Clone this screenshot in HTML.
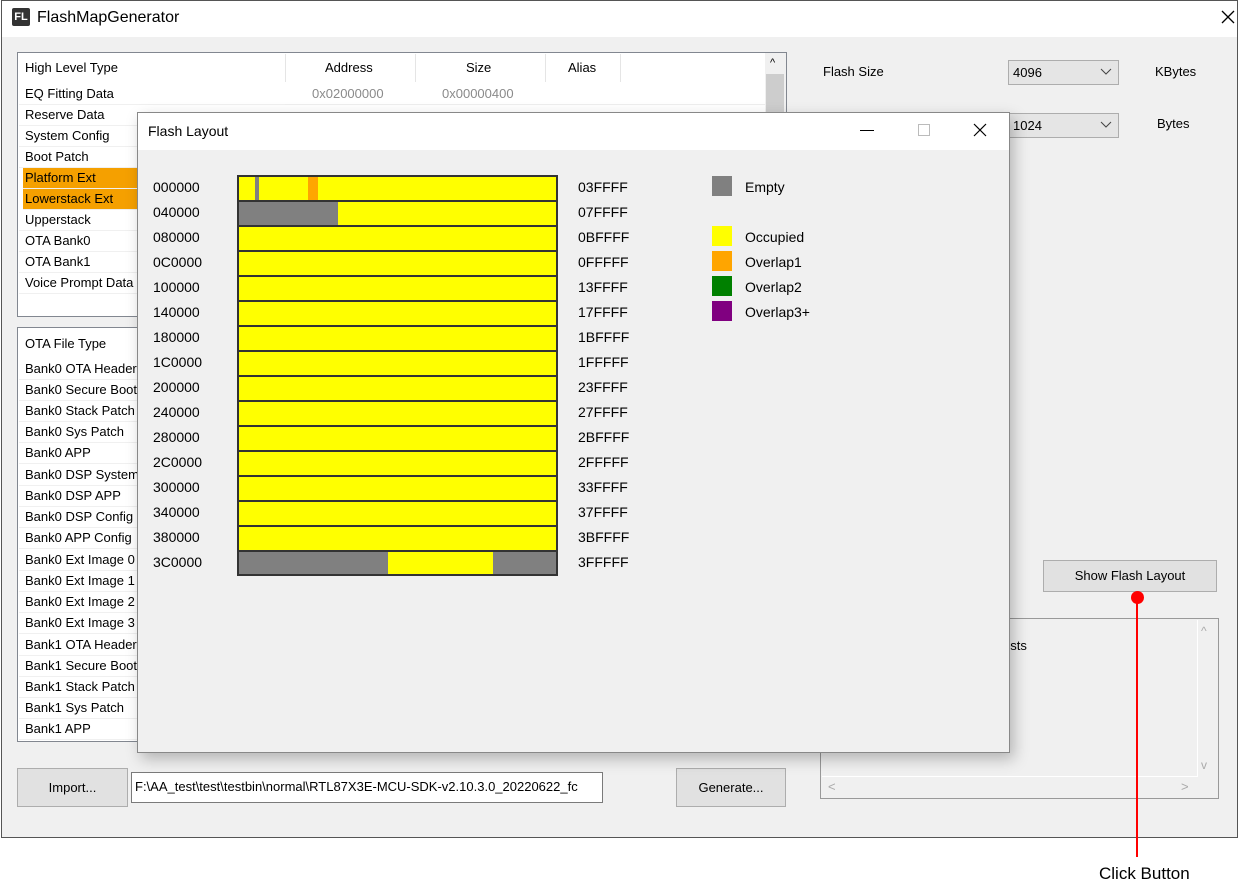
<!DOCTYPE html>
<html><head><meta charset="utf-8"><style>
*{margin:0;padding:0;box-sizing:border-box}
body{width:1248px;height:896px;background:#fff;position:relative;overflow:hidden;font-family:"Liberation Sans",sans-serif;font-size:13px;color:#000}
.a{position:absolute}
.t{position:absolute;white-space:nowrap;line-height:16px}
.row{position:absolute;left:19px;height:21px;width:266px;border-bottom:1px solid #f0f0f0;padding-left:6px;line-height:20px;white-space:nowrap}
.btn{position:absolute;background:#e1e1e1;border:1px solid #adadad;text-align:center}
.bar{position:absolute;left:237px;width:321px;height:27px;border:2px solid #333;background:#ff0}
.lbl{position:absolute;font-size:14px;line-height:16px}
.sq{position:absolute;left:712px;width:20px;height:20px}
</style></head><body>
<!-- main window -->
<div class="a" style="left:1px;top:0;width:1237px;height:838px;border:1px solid #555;background:#f0f0f0"></div>
<div class="a" style="left:2px;top:1px;width:1235px;height:36px;background:#fff"></div>
<div class="a" style="left:12px;top:8px;width:18px;height:18px;background:#333;border-radius:2px;color:#fff;font-weight:bold;font-size:11px;line-height:18px;text-align:center">FL</div>
<div class="t" style="left:37px;top:9px;font-size:16px;line-height:18px">FlashMapGenerator</div>
<svg class="a" style="left:1220px;top:9px" width="16" height="16"><path d="M2 2L14 14M14 2L2 14" stroke="#000" stroke-width="1.3"/></svg>

<!-- list 1 -->
<div class="a" style="left:17px;top:52px;width:770px;height:265px;border:1px solid #828790;background:#fff"></div>
<div class="a" style="left:765px;top:53px;width:21px;height:263px;background:#f0f0f0"></div>
<div class="a" style="left:766px;top:74px;width:18px;height:40px;background:#cdcdcd"></div>
<div class="t" style="left:770px;top:55px;font-size:11px">^</div>
<div class="t" style="left:25px;top:60px">High Level Type</div>
<div class="t" style="left:325px;top:60px">Address</div>
<div class="t" style="left:466px;top:60px">Size</div>
<div class="t" style="left:568px;top:60px">Alias</div>
<div class="a" style="left:285px;top:54px;width:1px;height:28px;background:#e5e5e5"></div>
<div class="a" style="left:415px;top:54px;width:1px;height:28px;background:#e5e5e5"></div>
<div class="a" style="left:545px;top:54px;width:1px;height:28px;background:#e5e5e5"></div>
<div class="a" style="left:620px;top:54px;width:1px;height:28px;background:#e5e5e5"></div>
<div class="t" style="left:312px;top:86px;color:#8a8a8a">0x02000000</div>
<div class="t" style="left:442px;top:86px;color:#8a8a8a">0x00000400</div>
<div class="a" style="left:285px;top:104px;width:480px;height:1px;background:#eee"></div>
<div class="row" style="top:84px">EQ Fitting Data</div>
<div class="row" style="top:105px">Reserve Data</div>
<div class="row" style="top:126px">System Config</div>
<div class="row" style="top:147px">Boot Patch</div>
<div class="row" style="top:168px;background:#f5a000;left:23px;padding-left:2px">Platform Ext</div>
<div class="row" style="top:189px;background:#f5a000;left:23px;padding-left:2px">Lowerstack Ext</div>
<div class="row" style="top:210px">Upperstack</div>
<div class="row" style="top:231px">OTA Bank0</div>
<div class="row" style="top:252px">OTA Bank1</div>
<div class="row" style="top:273px">Voice Prompt Data</div>

<!-- list 2 -->
<div class="a" style="left:17px;top:327px;width:130px;height:415px;border:1px solid #828790;background:#fff"></div>
<div class="t" style="left:25px;top:336px">OTA File Type</div>
<div class="row" style="top:359px;width:127px">Bank0 OTA Header</div>
<div class="row" style="top:380px;width:127px">Bank0 Secure Boot</div>
<div class="row" style="top:401px;width:127px">Bank0 Stack Patch</div>
<div class="row" style="top:422px;width:127px">Bank0 Sys Patch</div>
<div class="row" style="top:443px;width:127px">Bank0 APP</div>
<div class="row" style="top:465px;width:127px">Bank0 DSP System</div>
<div class="row" style="top:486px;width:127px">Bank0 DSP APP</div>
<div class="row" style="top:507px;width:127px">Bank0 DSP Config</div>
<div class="row" style="top:528px;width:127px">Bank0 APP Config</div>
<div class="row" style="top:550px;width:127px">Bank0 Ext Image 0</div>
<div class="row" style="top:571px;width:127px">Bank0 Ext Image 1</div>
<div class="row" style="top:592px;width:127px">Bank0 Ext Image 2</div>
<div class="row" style="top:613px;width:127px">Bank0 Ext Image 3</div>
<div class="row" style="top:635px;width:127px">Bank1 OTA Header</div>
<div class="row" style="top:656px;width:127px">Bank1 Secure Boot</div>
<div class="row" style="top:677px;width:127px">Bank1 Stack Patch</div>
<div class="row" style="top:698px;width:127px">Bank1 Sys Patch</div>
<div class="row" style="top:719px;width:127px">Bank1 APP</div>

<!-- bottom -->
<div class="btn" style="left:17px;top:768px;width:111px;height:39px;line-height:37px">Import...</div>
<div class="a" style="left:131px;top:772px;width:472px;height:31px;border:1px solid #7a7a7a;background:#fff;padding:6px 3px;white-space:nowrap;overflow:hidden;line-height:16px">F:\AA_test\test\testbin\normal\RTL87X3E-MCU-SDK-v2.10.3.0_20220622_fc</div>
<div class="btn" style="left:676px;top:768px;width:110px;height:39px;line-height:37px">Generate...</div>

<!-- right -->
<div class="t" style="left:823px;top:64px">Flash Size</div>
<div class="a" style="left:1008px;top:60px;width:111px;height:25px;border:1px solid #adadad;background:#e5e5e5;padding:4px 4px;line-height:16px">4096</div>
<svg class="a" style="left:1100px;top:68px" width="12" height="8"><path d="M1 1L6 6L11 1" stroke="#444" fill="none"/></svg>
<div class="t" style="left:1155px;top:64px">KBytes</div>
<div class="a" style="left:1008px;top:113px;width:111px;height:25px;border:1px solid #adadad;background:#e5e5e5;padding:4px 4px;line-height:16px">1024</div>
<svg class="a" style="left:1100px;top:121px" width="12" height="8"><path d="M1 1L6 6L11 1" stroke="#444" fill="none"/></svg>
<div class="t" style="left:1157px;top:116px">Bytes</div>
<div class="btn" style="left:1043px;top:560px;width:174px;height:32px;line-height:30px">Show Flash Layout</div>
<div class="a" style="left:820px;top:618px;width:399px;height:181px;border:1px solid #999;background:#f0f0f0"></div>
<div class="a" style="left:1197px;top:620px;width:1px;height:157px;background:#fff"></div>
<div class="a" style="left:822px;top:776px;width:375px;height:1px;background:#fff"></div>
<div class="t" style="left:1003px;top:638px">ests</div>
<div class="t" style="left:1201px;top:623px;color:#aaa;font-size:12px">^</div>
<div class="t" style="left:1201px;top:757px;color:#aaa;font-size:12px">v</div>
<div class="t" style="left:828px;top:779px;color:#aaa">&lt;</div>
<div class="t" style="left:1181px;top:779px;color:#aaa">&gt;</div>

<!-- dialog -->
<div class="a" style="left:137px;top:112px;width:873px;height:641px;box-shadow:4px 6px 14px rgba(0,0,0,0.25);border:1px solid #888;background:#f0f0f0"></div>
<div class="a" style="left:138px;top:113px;width:871px;height:37px;background:#fff"></div>
<div class="t" style="left:148px;top:123px;font-size:14px">Flash Layout</div>
<div class="a" style="left:860px;top:130px;width:14px;height:1px;background:#000"></div>
<div class="a" style="left:918px;top:124px;width:12px;height:12px;border:1px solid #bbb"></div>
<svg class="a" style="left:973px;top:123px" width="14" height="14"><path d="M1 1L13 13M13 1L1 13" stroke="#000" stroke-width="1.2"/></svg>

<!-- bars -->
<div class="bar" style="top:175px"></div>
<div class="a" style="left:255px;top:177px;width:4px;height:23px;background:#808080"></div>
<div class="a" style="left:308px;top:177px;width:10px;height:23px;background:#ffa500"></div>
<div class="bar" style="top:200px"></div>
<div class="a" style="left:239px;top:202px;width:99px;height:23px;background:#808080"></div>
<div class="bar" style="top:225px"></div>
<div class="bar" style="top:250px"></div>
<div class="bar" style="top:275px"></div>
<div class="bar" style="top:300px"></div>
<div class="bar" style="top:325px"></div>
<div class="bar" style="top:350px"></div>
<div class="bar" style="top:375px"></div>
<div class="bar" style="top:400px"></div>
<div class="bar" style="top:425px"></div>
<div class="bar" style="top:450px"></div>
<div class="bar" style="top:475px"></div>
<div class="bar" style="top:500px"></div>
<div class="bar" style="top:525px"></div>
<div class="bar" style="top:550px;height:26px;background:#808080"></div>
<div class="a" style="left:388px;top:552px;width:105px;height:22px;background:#ff0"></div>

<div class="lbl" style="left:153px;top:179px">000000</div><div class="lbl" style="left:578px;top:179px">03FFFF</div>
<div class="lbl" style="left:153px;top:204px">040000</div><div class="lbl" style="left:578px;top:204px">07FFFF</div>
<div class="lbl" style="left:153px;top:229px">080000</div><div class="lbl" style="left:578px;top:229px">0BFFFF</div>
<div class="lbl" style="left:153px;top:254px">0C0000</div><div class="lbl" style="left:578px;top:254px">0FFFFF</div>
<div class="lbl" style="left:153px;top:279px">100000</div><div class="lbl" style="left:578px;top:279px">13FFFF</div>
<div class="lbl" style="left:153px;top:304px">140000</div><div class="lbl" style="left:578px;top:304px">17FFFF</div>
<div class="lbl" style="left:153px;top:329px">180000</div><div class="lbl" style="left:578px;top:329px">1BFFFF</div>
<div class="lbl" style="left:153px;top:354px">1C0000</div><div class="lbl" style="left:578px;top:354px">1FFFFF</div>
<div class="lbl" style="left:153px;top:379px">200000</div><div class="lbl" style="left:578px;top:379px">23FFFF</div>
<div class="lbl" style="left:153px;top:404px">240000</div><div class="lbl" style="left:578px;top:404px">27FFFF</div>
<div class="lbl" style="left:153px;top:429px">280000</div><div class="lbl" style="left:578px;top:429px">2BFFFF</div>
<div class="lbl" style="left:153px;top:454px">2C0000</div><div class="lbl" style="left:578px;top:454px">2FFFFF</div>
<div class="lbl" style="left:153px;top:479px">300000</div><div class="lbl" style="left:578px;top:479px">33FFFF</div>
<div class="lbl" style="left:153px;top:504px">340000</div><div class="lbl" style="left:578px;top:504px">37FFFF</div>
<div class="lbl" style="left:153px;top:529px">380000</div><div class="lbl" style="left:578px;top:529px">3BFFFF</div>
<div class="lbl" style="left:153px;top:554px">3C0000</div><div class="lbl" style="left:578px;top:554px">3FFFFF</div>

<div class="sq" style="top:176px;background:#808080"></div><div class="lbl" style="left:745px;top:179px">Empty</div>
<div class="sq" style="top:226px;background:#ff0"></div><div class="lbl" style="left:745px;top:229px">Occupied</div>
<div class="sq" style="top:251px;background:#ffa500"></div><div class="lbl" style="left:745px;top:254px">Overlap1</div>
<div class="sq" style="top:276px;background:#008000"></div><div class="lbl" style="left:745px;top:279px">Overlap2</div>
<div class="sq" style="top:301px;background:#800080"></div><div class="lbl" style="left:745px;top:304px">Overlap3+</div>

<!-- annotation -->
<div class="a" style="left:1136px;top:597px;width:2px;height:260px;background:#f00"></div>
<div class="a" style="left:1131px;top:591px;width:13px;height:13px;border-radius:50%;background:#f00"></div>
<div class="t" style="left:1099px;top:865px;font-size:17px;line-height:18px">Click Button</div>
</body></html>
